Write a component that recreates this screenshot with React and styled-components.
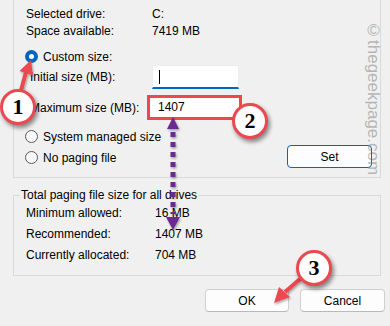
import React from 'react';
import styled, { createGlobalStyle } from 'styled-components';

const GlobalStyle = createGlobalStyle`
  html, body {
    margin: 0;
    padding: 0;
    background: #f0f0f0;
  }
`;

const RED = '#e9494f';
const PURPLE = '#6a2a8e';

function App() {
  return (
    <Page>
      <GlobalStyle />
      <TopGroup>
        <InfoRow>
          <span>Selected drive:</span>
          <span>C:</span>
        </InfoRow>
        <InfoRow>
          <span>Space available:</span>
          <span>7419 MB</span>
        </InfoRow>

        <RadioRow $top={8}>
          <Radio $checked />
          <span>Custom size:</span>
        </RadioRow>

        <FieldRow>
          <FieldLabel>Initial size (MB):</FieldLabel>
          <TextBox $focused>
            <Caret />
          </TextBox>
        </FieldRow>
        <FieldRow $top={6} $tall>
          <FieldLabel>Maximum size (MB):</FieldLabel>
          <TextBox $highlight>1407</TextBox>
        </FieldRow>

        <RadioRow $top={8}>
          <Radio />
          <span>System managed size</span>
        </RadioRow>
        <LastRow>
          <RadioRow $top={2}>
            <Radio />
            <span>No paging file</span>
          </RadioRow>
          <DialogButton $primary $width={85}>Set</DialogButton>
        </LastRow>
      </TopGroup>

      <TotalGroup>
        <Legend>Total paging file size for all drives</Legend>
        <TotalRow>
          <span>Minimum allowed:</span>
          <span>16 MB</span>
        </TotalRow>
        <TotalRow>
          <span>Recommended:</span>
          <span>1407 MB</span>
        </TotalRow>
        <TotalRow>
          <span>Currently allocated:</span>
          <span>704 MB</span>
        </TotalRow>
      </TotalGroup>

      <ButtonBar>
        <DialogButton $width={84}>OK</DialogButton>
        <DialogButton $width={85}>Cancel</DialogButton>
      </ButtonBar>

      <Annotations>
        <svg width="390" height="326" viewBox="0 0 390 326">
          <defs>
            <filter id="soft" x="-20%" y="-20%" width="140%" height="140%">
              <feDropShadow dx="1" dy="1.5" stdDeviation="1" floodOpacity="0.35" />
            </filter>
          </defs>
          {/* arrow from 1 to the radio */}
          <g filter="url(#soft)" fill={RED} stroke={RED}>
            <line x1="20" y1="94" x2="26" y2="72" strokeWidth="4" />
            <polygon points="31,60 19.5,71 33,75.5" stroke="none" />
          </g>
          {/* arrow from 3 to OK */}
          <g filter="url(#soft)" fill={RED} stroke={RED}>
            <line x1="300" y1="279" x2="285" y2="292" strokeWidth="4" />
            <polygon points="274,303 279,287 290,297" stroke="none" />
          </g>
          {/* purple double arrow */}
          <g filter="url(#soft)" fill={PURPLE} stroke={PURPLE}>
            <polygon points="173,117 167,129 179,129" stroke="none" />
            <line x1="173" y1="132" x2="173" y2="214" strokeWidth="5" strokeDasharray="5 5" />
            <polygon points="173,230 166,217 180,217" stroke="none" />
          </g>
        </svg>
        <Badge $x={18} $y={107}>1</Badge>
        <Badge $x={250} $y={121}>2</Badge>
        <Badge $x={314} $y={268}>3</Badge>
        <Watermark>©thegeekpage.com</Watermark>
      </Annotations>
    </Page>
  );
}

const Page = styled.div`
  position: relative;
  width: 390px;
  height: 326px;
  overflow: hidden;
  background: #f0f0f0;
  font-family: 'Liberation Sans', Arial, sans-serif;
  font-size: 12px;
  color: #000;
`;

const TopGroup = styled.section`
  box-sizing: border-box;
  width: 368px;
  margin-left: 13px;
  padding: 6px 8px 9px 12px;
  border: 1px solid #dadada;
  border-top: none;
`;

const InfoRow = styled.div`
  display: grid;
  grid-template-columns: 126px 1fr;
  line-height: 17px;
`;

const RadioRow = styled.label`
  display: flex;
  align-items: center;
  gap: 5px;
  height: 17px;
  margin-top: ${(p) => p.$top || 0}px;
  margin-left: -1px;
`;

const Radio = styled.span`
  box-sizing: border-box;
  width: 13px;
  height: 13px;
  border-radius: 50%;
  background: ${(p) => (p.$checked ? '#fff' : '#f7f7f7')};
  border: ${(p) => (p.$checked ? '4px solid #0067c0' : '1px solid #5a5a5a')};
`;

const FieldRow = styled.div`
  display: grid;
  grid-template-columns: 126px 1fr;
  align-items: center;
  height: ${(p) => (p.$tall ? 25 : 24)}px;
  margin-top: ${(p) => p.$top || 0}px;
`;

const FieldLabel = styled.span`
  padding-left: 4px;
`;

const TextBox = styled.div`
  box-sizing: border-box;
  display: flex;
  align-items: center;
  background: #fff;
  ${(p) =>
    p.$highlight
      ? `
    width: 95px;
    height: 25px;
    margin-left: -5px;
    padding-left: 8px;
    border: 3px solid ${RED};
    padding-bottom: 1px;
  `
      : `
    width: 87px;
    height: 24px;
    padding-left: 6px;
    border: 1px solid #ececec;
    border-bottom: 2px solid ${p.$focused ? '#0067c0' : '#8a8a8a'};
  `}
`;

const Caret = styled.span`
  width: 1px;
  height: 14px;
  background: #000;
`;

const LastRow = styled.div`
  display: flex;
  align-items: center;
  justify-content: space-between;
  height: 23px;
`;

const DialogButton = styled.button`
  box-sizing: border-box;
  width: ${(p) => p.$width}px;
  height: 23px;
  padding: 0;
  font: inherit;
  color: #000;
  background: #fdfdfd;
  border-radius: 4px;
  border: 1px solid ${(p) => (p.$primary ? '#0067c0' : '#d0d0d0')};
  border-bottom-color: ${(p) => (p.$primary ? '#0067c0' : '#b9b9b9')};
`;

const TotalGroup = styled.fieldset`
  box-sizing: border-box;
  width: 368px;
  min-width: 0;
  margin: 10px 0 0 13px;
  padding: 0 8px 9px 12px;
  border: 1px solid #dadada;
`;

const Legend = styled.legend`
  padding: 0 1px;
  margin-left: -6px;
  line-height: 15px;
`;

const TotalRow = styled.div`
  display: grid;
  grid-template-columns: 129px 1fr;
  line-height: 21px;
`;

const ButtonBar = styled.div`
  display: flex;
  justify-content: flex-end;
  gap: 11px;
  margin-top: 13px;
  padding-right: 5px;
`;

const Annotations = styled.div`
  position: absolute;
  inset: 0;
  pointer-events: none;

  svg {
    position: absolute;
    left: 0;
    top: 0;
  }
`;

const Badge = styled.div`
  position: absolute;
  left: ${(p) => p.$x - 18}px;
  top: ${(p) => p.$y - 18}px;
  box-sizing: border-box;
  width: 36px;
  height: 36px;
  border-radius: 50%;
  background: #fff;
  border: 3.5px solid ${RED};
  box-shadow: 2px 3px 4px rgba(0, 0, 0, 0.45);
  display: flex;
  align-items: center;
  justify-content: center;
  font-family: 'Liberation Serif', 'Times New Roman', serif;
  font-weight: bold;
  font-size: 22px;
  line-height: 1;
`;

const Watermark = styled.div`
  position: absolute;
  left: 363px;
  top: 21px;
  writing-mode: vertical-rl;
  font-family: 'Liberation Sans', Arial, sans-serif;
  font-size: 17px;
  color: rgba(120, 120, 120, 0.5);
  white-space: nowrap;
`;

export default App;
